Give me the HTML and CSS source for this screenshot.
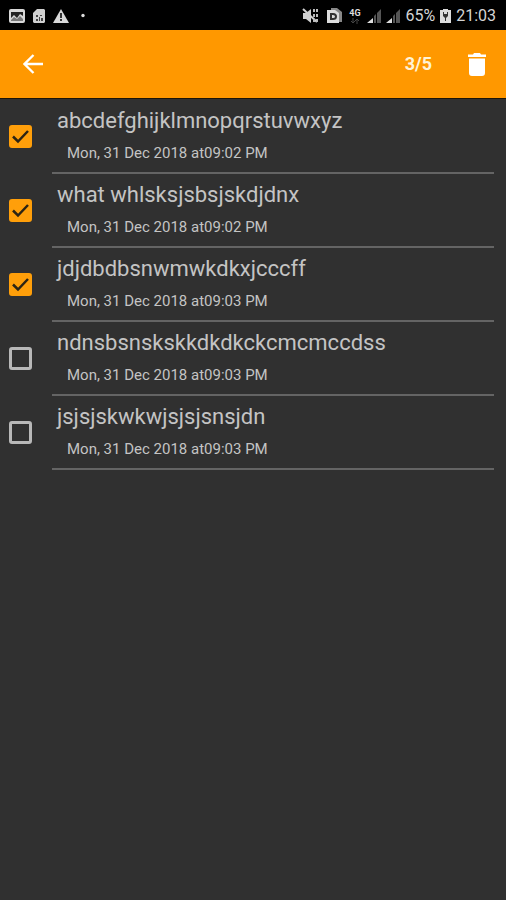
FILE: index.html
```html
<!DOCTYPE html>
<html lang="en">
<head>
<meta charset="utf-8">
<meta name="viewport" content="width=device-width, initial-scale=1">
<title>Notes</title>
<link rel="stylesheet" href="styles.css">
</head>
<body>
<div class="status">
  <div class="status-left">
    <svg width="16" height="16" viewBox="0 0 16 16"><rect x="0" y="1" width="16" height="14" rx="2" fill="#d8d8d8"/><path d="M2 4h12v4l-3-2-3 4-3-3-3 3z" fill="#222"/><path d="M2 12l3-3 3 2 3-3 3 3v2H2z" fill="#777"/></svg>
    <svg width="12" height="16" viewBox="0 0 12 16"><path d="M4 1h7l1 1v12l-1 1H1l-1-1V5z" fill="#d0d0d0"/><path d="M3 7h2v2H3zM7 7h2v1H7zM3 11h2v2H3zM6 9h1v4H6zM8 10h2v3H8z" fill="#444"/></svg>
    <svg width="16" height="16" viewBox="0 0 16 16"><path d="M8 1l8 14H0z" fill="#d8d8d8"/><path d="M7 5h2v5H7zM7 11h2v2H7z" fill="#333"/></svg>
    <svg width="12" height="16" viewBox="0 0 12 16"><circle cx="6" cy="7.500" r="1.700" fill="#ddd"/></svg>
  </div>
  <div class="status-right">
    <svg width="20" height="16" viewBox="0 0 20 16"><path d="M1 5h3l5-4v14l-5-4H1z" fill="#d0d0d0"/><path d="M1 1l14 13" stroke="#d0d0d0" stroke-width="2"/><path d="M12 1v14M15 1v14" fill="none" stroke="#bbb" stroke-width="2" stroke-dasharray="3 2"/></svg>
    <svg width="15" height="16" viewBox="0 0 15 16"><path d="M4 0h6l5 4v10H4z" fill="#888"/><path d="M0 2h8l4 3v10H0z" fill="#ddd"/><path d="M3 5h3q4 0 4 3.500T6 12H3zM5 7v3h1q2 0 2-1.500T6 7z" fill="#333" fill-rule="evenodd"/></svg>
    <div class="net"><span>4G</span><svg width="10" height="6" viewBox="0 0 10 6"><path d="M3 0v5M1 3l2 2 2-2M7 6V1M5 3l2-2 2 2" fill="none" stroke="#444"/></svg></div>
    <svg width="14" height="16" viewBox="0 0 14 16"><path d="M0 15l6-5v5z" fill="#ddd"/><path d="M7 8l2-2v9H7zM10 5l4-4v14h-4z" fill="#555"/></svg>
    <svg width="14" height="16" viewBox="0 0 14 16"><path d="M0 15l6-5v5z" fill="#ddd"/><path d="M7 8l2-2v9H7zM10 5l4-4v14h-4z" fill="#555"/></svg>
    <span class="status-text">65%</span>
    <svg width="11" height="16" viewBox="0 0 11 16"><path d="M3 1h5v1h3v13H0V2h3z" fill="#ddd"/><path d="M3 4v4l2 2v3h1v-3l2-2V4H7v2H4V4z" fill="#333"/></svg>
    <span class="status-text">21:03</span>
  </div>
</div>
<header class="bar">
  <button class="icon-btn" type="button" aria-label="Back"><svg width="20" height="20" viewBox="0 0 20 20"><path d="M20 10H2M10.500 1L1.500 10l9 9" fill="none" stroke="#fff" stroke-width="2.300"/></svg></button>
  <span class="count">3/5</span>
  <button class="icon-btn" type="button" aria-label="Delete"><svg width="18" height="23" viewBox="0 0 18 23"><path d="M0 1.500h5L6 0h6l1 1.500h5V4H0zM1 5.500h16V20q0 3-3 3H4q-3 0-3-3z" fill="#fff"/></svg></button>
</header>
<main>
  <ul class="list">
    <li class="item"><span class="check"><input type="checkbox" id="n1" checked><svg viewBox="0 0 23 23"><path d="M4 11.500l5 5L19 6"/></svg></span><label class="note" for="n1"><span class="title">abcdefghijklmnopqrstuvwxyz</span><span class="date">Mon, 31 Dec 2018 at09:02 PM</span></label></li>
    <li class="item"><span class="check"><input type="checkbox" id="n2" checked><svg viewBox="0 0 23 23"><path d="M4 11.500l5 5L19 6"/></svg></span><label class="note" for="n2"><span class="title">what whlsksjsbsjskdjdnx</span><span class="date">Mon, 31 Dec 2018 at09:02 PM</span></label></li>
    <li class="item"><span class="check"><input type="checkbox" id="n3" checked><svg viewBox="0 0 23 23"><path d="M4 11.500l5 5L19 6"/></svg></span><label class="note" for="n3"><span class="title">jdjdbdbsnwmwkdkxjcccff</span><span class="date">Mon, 31 Dec 2018 at09:03 PM</span></label></li>
    <li class="item"><span class="check"><input type="checkbox" id="n4"><svg viewBox="0 0 23 23"><path d="M4 11.500l5 5L19 6"/></svg></span><label class="note" for="n4"><span class="title">ndnsbsnskskkdkdkckcmcmccdss</span><span class="date">Mon, 31 Dec 2018 at09:03 PM</span></label></li>
    <li class="item"><span class="check"><input type="checkbox" id="n5"><svg viewBox="0 0 23 23"><path d="M4 11.500l5 5L19 6"/></svg></span><label class="note" for="n5"><span class="title">jsjsjskwkwjsjsjsnsjdn</span><span class="date">Mon, 31 Dec 2018 at09:03 PM</span></label></li>
  </ul>
</main>
</body>
</html>
```
FILE: styles.css
```css
* {
  box-sizing: border-box;
}

body {
  margin: 0;
  min-height: 100vh;
  background: #303030;
  color: #c4c4c4;
  font-family: Roboto, "Liberation Sans", sans-serif;
}

svg {
  display: block;
  flex: none;
}

.status {
  display: flex;
  align-items: center;
  justify-content: space-between;
  height: 30px;
  padding: 2px 10px 0 9px;
  background: #000;
}

.status-left,
.status-right {
  display: flex;
  align-items: center;
}

.status-left {
  gap: 8px;
}

.status-right {
  gap: 5px;
}

.status-text {
  color: #d4d4d4;
  font-size: 16px;
  line-height: 20px;
}

.net {
  display: flex;
  flex-direction: column;
  align-items: center;
  width: 15px;
  color: #ddd;
  font-size: 9px;
  font-weight: 700;
  line-height: 9px;
}

.bar {
  display: flex;
  align-items: center;
  height: 69px;
  padding: 0 8px 0 12px;
  background: #ff9800;
  border-bottom: 1px solid #1c1508;
}

.icon-btn {
  display: grid;
  place-items: center;
  width: 42px;
  height: 42px;
  padding: 0;
  border: 0;
  background: none;
}

.count {
  margin-left: auto;
  margin-right: 24px;
  color: #fff3d6;
  font-size: 18px;
  font-weight: 700;
  line-height: 24px;
}

.list {
  margin: 0;
  padding: 1px 12px 0 9px;
  list-style: none;
}

.item {
  display: grid;
  grid-template-columns: 23px 1fr;
  column-gap: 20px;
  align-items: center;
}

.check {
  display: grid;
  width: 23px;
  height: 23px;
  margin-bottom: 2px;
}

.check input,
.check svg {
  grid-area: 1 / 1;
  width: 23px;
  height: 23px;
}

.check input {
  appearance: none;
  margin: 0;
  border: 3px solid #b8b8b8;
  border-radius: 3px;
}

.check input:checked {
  border-color: #ff9f0a;
  background: #ff9f0a;
}

.check svg {
  visibility: hidden;
  pointer-events: none;
  fill: none;
  stroke: #2c2414;
  stroke-width: 2.5;
}

.check input:checked + svg {
  visibility: visible;
}

.note {
  display: flex;
  flex-direction: column;
  gap: 8px;
  height: 74px;
  padding: 7px 0 0 5px;
  border-bottom: 2px solid #646464;
}

.title {
  font-size: 22px;
  line-height: 28px;
}

.date {
  padding-left: 10px;
  font-size: 15px;
  line-height: 20px;
}
```
